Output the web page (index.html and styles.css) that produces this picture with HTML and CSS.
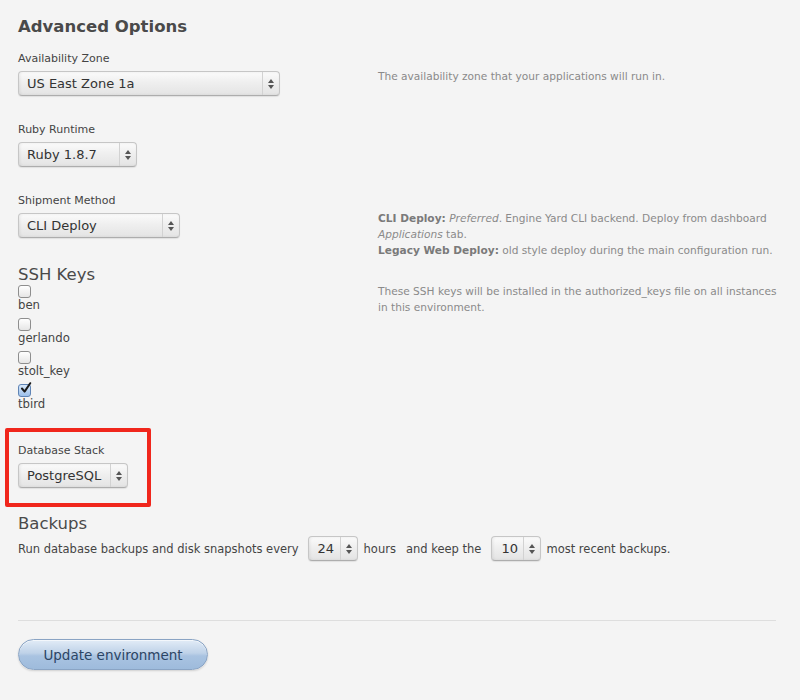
FILE: index.html
```html
<!DOCTYPE html>
<html>
<head>
<meta charset="utf-8">
<link rel="stylesheet" href="styles.css">
</head>
<body>
<div class="page">
  <h2 class="title">Advanced Options</h2>

  <div class="field">
    <label class="label">Availability Zone</label>
    <div class="control">
      <div class="select w-zone"><span class="select-value">US East Zone 1a</span><span class="select-arrows"><i class="up"></i><i class="down"></i></span></div>
    </div>
    <p class="help">The availability zone that your applications will run in.</p>
  </div>

  <div class="field">
    <label class="label">Ruby Runtime</label>
    <div class="control">
      <div class="select w-ruby"><span class="select-value">Ruby 1.8.7</span><span class="select-arrows"><i class="up"></i><i class="down"></i></span></div>
    </div>
  </div>

  <div class="field">
    <label class="label">Shipment Method</label>
    <div class="control">
      <div class="select w-ship"><span class="select-value">CLI Deploy</span><span class="select-arrows"><i class="up"></i><i class="down"></i></span></div>
    </div>
    <p class="help help-tall"><b>CLI Deploy:</b> <em>Preferred</em>. Engine Yard CLI backend. Deploy from dashboard<br><em>Applications</em> tab.<br><b>Legacy Web Deploy:</b> old style deploy during the main configuration run.</p>
  </div>

  <h3 class="section">SSH Keys</h3>
  <div class="keys">
    <ul class="key-list">
      <li><span class="check"></span><span class="key-name">ben</span></li>
      <li><span class="check"></span><span class="key-name">gerlando</span></li>
      <li><span class="check"></span><span class="key-name">stolt_key</span></li>
      <li><span class="check checked"><svg viewBox="0 0 13 13" width="13" height="13"><path d="M3 6.5 L5.6 9.6 L11.2 1.2" fill="none" stroke="#1b1b1b" stroke-width="2" stroke-linecap="round" stroke-linejoin="round"/></svg></span><span class="key-name">tbird</span></li>
    </ul>
    <p class="help help-keys">These SSH keys will be installed in the authorized_keys file on all instances<br>in this environment.</p>
  </div>

  <div class="highlight">
    <label class="label">Database Stack</label>
    <div class="control">
      <div class="select w-db"><span class="select-value">PostgreSQL</span><span class="select-arrows"><i class="up"></i><i class="down"></i></span></div>
    </div>
  </div>

  <h3 class="section backups-title">Backups</h3>
  <div class="backups-row">
    <span>Run database backups and disk snapshots every</span>
    <div class="select w-num sel-hours"><span class="select-value">24</span><span class="select-arrows"><i class="up"></i><i class="down"></i></span></div>
    <span>hours</span>
    <span class="gap-text">and keep the</span>
    <div class="select w-num sel-keep"><span class="select-value">10</span><span class="select-arrows"><i class="up"></i><i class="down"></i></span></div>
    <span>most recent backups.</span>
  </div>

  <hr class="divider">

  <button class="btn">Update environment</button>
</div>
</body>
</html>
```

FILE: styles.css
```css
html, body {
  margin: 0;
  padding: 0;
}
body {
  background: #f4f4f4;
  font-family: "DejaVu Sans", "Liberation Sans", sans-serif;
  color: #444;
  width: 800px;
  height: 700px;
  overflow: hidden;
}
.page {
  padding: 17px 0 0 18px;
}
.title {
  margin: 0 0 15px;
  font-size: 16.5px;
  line-height: 20px;
  font-weight: bold;
  color: #4a4a4a;
}
.field {
  display: grid;
  grid-template-columns: 360px 1fr;
  margin-bottom: 27px;
}
.label {
  grid-column: 1 / 3;
  display: block;
  font-size: 11px;
  line-height: 14px;
  color: #444;
  margin-bottom: 5px;
}
.control {
  grid-column: 1;
  display: flex;
}
.help {
  grid-column: 2;
  margin: -3.5px 0 0;
  font-size: 10.6px;
  line-height: 16.3px;
  color: #8a8a8a;
  white-space: nowrap;
}
.help b {
  color: #7a7a7a;
}
.help-tall {
  margin-bottom: -30px;
}
.select {
  box-sizing: border-box;
  height: 25px;
  display: flex;
  align-items: stretch;
  border: 1px solid #c6c6c6;
  border-bottom-color: #adadad;
  border-radius: 4px;
  background: linear-gradient(to bottom, #fbfbfb 0%, #efefef 45%, #e4e4e4 100%);
  box-shadow: inset 1px 0 3px rgba(0,0,0,0.07), 0 1px 1px rgba(0,0,0,0.08);
  color: #333;
}
.select-value {
  flex: 1;
  font-size: 13px;
  line-height: 23px;
  padding-left: 8px;
  white-space: nowrap;
  overflow: hidden;
}
.select-arrows {
  width: 16px;
  border-left: 1px solid #d2d2d2;
  display: flex;
  flex-direction: column;
  align-items: center;
  justify-content: center;
  gap: 2px;
}
.select-arrows i {
  display: block;
  width: 0;
  height: 0;
  border-left: 3px solid transparent;
  border-right: 3px solid transparent;
}
.select-arrows .up {
  border-bottom: 4px solid #555;
}
.select-arrows .down {
  border-top: 4px solid #555;
}
.w-zone { width: 262px; }
.w-ruby { width: 119px; }
.w-ship { width: 162px; }
.w-db { width: 110px; }
.w-num { width: 50px; }
.w-num .select-value { padding-left: 9px; }

.section {
  margin: 26px 0 0;
  font-size: 16.5px;
  line-height: 20px;
  font-weight: normal;
  color: #4a4a4a;
}
.keys {
  display: grid;
  grid-template-columns: 360px 1fr;
}
.key-list {
  list-style: none;
  margin: 0;
  padding: 0;
}
.key-list li {
  margin-bottom: 5px;
}
.check {
  box-sizing: border-box;
  display: block;
  width: 13px;
  height: 13px;
  border: 1px solid #8e8e8e;
  border-radius: 3px;
  background: linear-gradient(to bottom, #ffffff, #e6e6e6);
  position: relative;
}
.check.checked {
  border-color: #5f84b5;
  background: linear-gradient(to bottom, #d8e8fa, #9cc0ea);
}
.check.checked svg {
  position: absolute;
  left: 0;
  top: -3px;
}
.key-name {
  display: block;
  font-size: 11.7px;
  line-height: 15px;
  color: #444;
}
.help-keys {
  margin-top: -2px;
}

.highlight {
  width: fit-content;
  margin: 11px 0 0 -13px;
  padding: 12px 19px 15px 9px;
  border: 4px solid #f0261c;
  border-radius: 2px;
}
.highlight .label {
  margin-bottom: 5px;
}

.backups-title {
  margin-top: 7px;
}
.backups-row {
  display: flex;
  align-items: center;
  margin-top: 2px;
  font-size: 11.5px;
  color: #444;
  white-space: nowrap;
}
.sel-hours { margin: 0 6px 0 9px; }
.gap-text { margin-left: 10px; }
.sel-keep { margin: 0 5px 0 10px; }

.divider {
  margin: 59px 0 0;
  width: 758px;
  border: 0;
  height: 1px;
  background: #dedede;
}
.btn {
  margin-top: 18px;
  width: 190px;
  height: 31px;
  border-radius: 16px;
  border: 1px solid #8aa4c4;
  background: linear-gradient(to bottom, #e2ecf7 0%, #bfd2e8 45%, #a9c3e1 55%, #9ebbdc 100%);
  box-shadow: 0 1px 2px rgba(0,0,0,0.15), inset 0 1px 0 rgba(255,255,255,0.6);
  font-family: "DejaVu Sans", "Liberation Sans", sans-serif;
  font-size: 13.5px;
  color: #2c4565;
  padding: 0;
}
```
